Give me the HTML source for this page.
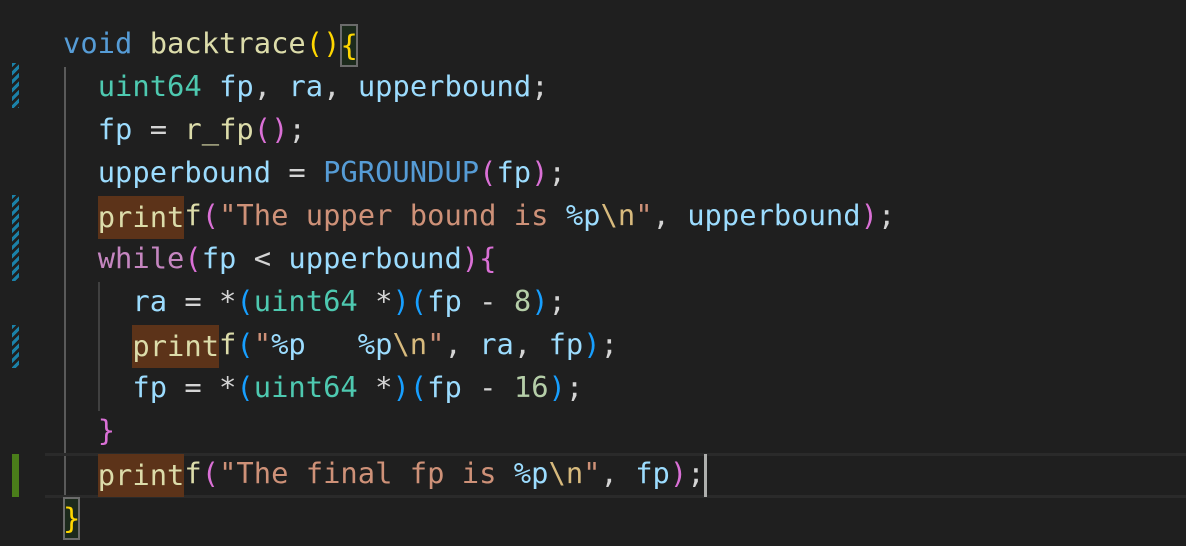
<!DOCTYPE html>
<html><head><meta charset="utf-8"><style>
html,body{margin:0;padding:0;background:#1f1f1f;width:1186px;height:546px;overflow:hidden}
.l{position:absolute;left:63px;height:43px;line-height:39px;font-family:"DejaVu Sans Mono","Liberation Mono",monospace;font-size:28.8px;white-space:pre;color:#d4d4d4}
.k{color:#569cd6}.f{color:#dcdcaa}.t{color:#4ec9b0}.v{color:#9cdcfe}.s{color:#ce9178}.e{color:#d7ba7d}.n{color:#b5cea8}.c{color:#c586c0}
.y{color:#ffd700}.p{color:#da70d6}.b{color:#179fff}
.hl{background:#5c3319;display:inline-block;height:43px;vertical-align:top;line-height:43px}
.box{outline:2px solid #6b6b6b;outline-offset:-2px;background:#1c2a1c;display:inline-block;height:43px;vertical-align:top;line-height:43px}
.g{position:absolute;width:2px;background:#404040}
.h{position:absolute;left:12px;width:7px;background:repeating-linear-gradient(135deg,#1b81a8 0 3px,transparent 3px 6px)}
</style></head><body>
<div class="g" style="left:64px;top:67px;height:430px;background:#5a5a5a"></div>
<div class="g" style="left:98px;top:282px;height:129px"></div>
<div class="h" style="top:63px;height:45px"></div>
<div class="h" style="top:195px;height:86px"></div>
<div class="h" style="top:325px;height:43px"></div>
<div style="position:absolute;left:12px;top:454px;width:7px;height:43px;background:#4a7d1a"></div>
<div style="position:absolute;left:45px;top:453px;width:1141px;height:45px;border-top:3px solid #2a2a2a;border-bottom:3px solid #2a2a2a;box-sizing:border-box"></div>
<div style="position:absolute;left:704px;top:454px;width:3px;height:43px;background:#aeafad"></div>

<div class="l" style="top:24px"><span class="k">void</span> <span class="f">backtrace</span><span class="y">()</span><span class="y box">{</span></div>
<div class="l" style="top:67px">  <span class="t">uint64</span> <span class="v">fp</span>, <span class="v">ra</span>, <span class="v">upperbound</span>;</div>
<div class="l" style="top:110px">  <span class="v">fp</span> = <span class="f">r_fp</span><span class="p">()</span>;</div>
<div class="l" style="top:153px">  <span class="v">upperbound</span> = <span class="k">PGROUNDUP</span><span class="p">(</span><span class="v">fp</span><span class="p">)</span>;</div>
<div class="l" style="top:196px">  <span class="f hl">print</span><span class="f">f</span><span class="p">(</span><span class="s">"The upper bound is </span><span class="v">%p</span><span class="e">\n</span><span class="s">"</span>, <span class="v">upperbound</span><span class="p">)</span>;</div>
<div class="l" style="top:239px">  <span class="c">while</span><span class="p">(</span><span class="v">fp</span> &lt; <span class="v">upperbound</span><span class="p">){</span></div>
<div class="l" style="top:282px">    <span class="v">ra</span> = *<span class="b">(</span><span class="t">uint64</span> *<span class="b">)(</span><span class="v">fp</span> - <span class="n">8</span><span class="b">)</span>;</div>
<div class="l" style="top:325px">    <span class="f hl">print</span><span class="f">f</span><span class="b">(</span><span class="s">"</span><span class="v">%p</span><span class="s">   </span><span class="v">%p</span><span class="e">\n</span><span class="s">"</span>, <span class="v">ra</span>, <span class="v">fp</span><span class="b">)</span>;</div>
<div class="l" style="top:368px">    <span class="v">fp</span> = *<span class="b">(</span><span class="t">uint64</span> *<span class="b">)(</span><span class="v">fp</span> - <span class="n">16</span><span class="b">)</span>;</div>
<div class="l" style="top:411px">  <span class="p">}</span></div>
<div class="l" style="top:454px">  <span class="f hl">print</span><span class="f">f</span><span class="p">(</span><span class="s">"The final fp is </span><span class="v">%p</span><span class="e">\n</span><span class="s">"</span>, <span class="v">fp</span><span class="p">)</span>;</div>
<div class="l" style="top:497px"><span class="y box">}</span></div>
</body></html>
